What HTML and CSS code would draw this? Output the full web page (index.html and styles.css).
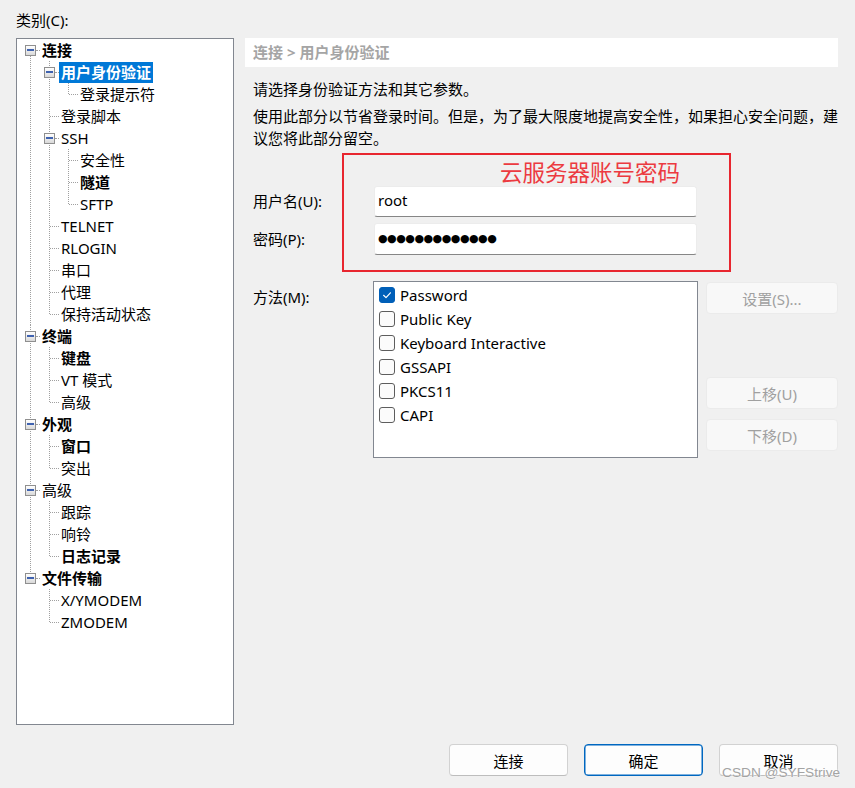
FILE: index.html
```html
<!DOCTYPE html>
<html lang="zh-CN">
<head>
<meta charset="utf-8">
<title>会话选项</title>
<link rel="stylesheet" href="styles.css">
</head>
<body>
<div class="dialog">
  <div class="cat-label">类别(C):</div>
  <div class="main">
    <div class="tree">
      <ul class="tree-root">
        <li>
          <div class="row"><span class="g"><span class="box"><i></i></span><span class="hl hb"></span></span><span class="t b">连接</span></div>
          <ul>
            <li>
              <div class="row"><span class="g"><span class="box"><i></i></span><span class="hl hb"></span></span><span class="t b sel">用户身份验证</span></div>
              <ul>
                <li><div class="row"><span class="g"><span class="hl"></span></span><span class="t">登录提示符</span></div></li>
              </ul>
            </li>
            <li><div class="row"><span class="g"><span class="hl"></span></span><span class="t">登录脚本</span></div></li>
            <li>
              <div class="row"><span class="g"><span class="box"><i></i></span><span class="hl hb"></span></span><span class="t">SSH</span></div>
              <ul>
                <li><div class="row"><span class="g"><span class="hl"></span></span><span class="t">安全性</span></div></li>
                <li><div class="row"><span class="g"><span class="hl"></span></span><span class="t b">隧道</span></div></li>
                <li><div class="row"><span class="g"><span class="hl"></span></span><span class="t">SFTP</span></div></li>
              </ul>
            </li>
            <li><div class="row"><span class="g"><span class="hl"></span></span><span class="t">TELNET</span></div></li>
            <li><div class="row"><span class="g"><span class="hl"></span></span><span class="t">RLOGIN</span></div></li>
            <li><div class="row"><span class="g"><span class="hl"></span></span><span class="t">串口</span></div></li>
            <li><div class="row"><span class="g"><span class="hl"></span></span><span class="t">代理</span></div></li>
            <li><div class="row"><span class="g"><span class="hl"></span></span><span class="t">保持活动状态</span></div></li>
          </ul>
        </li>
        <li>
          <div class="row"><span class="g"><span class="box"><i></i></span><span class="hl hb"></span></span><span class="t b">终端</span></div>
          <ul>
            <li><div class="row"><span class="g"><span class="hl"></span></span><span class="t b">键盘</span></div></li>
            <li><div class="row"><span class="g"><span class="hl"></span></span><span class="t">VT 模式</span></div></li>
            <li><div class="row"><span class="g"><span class="hl"></span></span><span class="t">高级</span></div></li>
          </ul>
        </li>
        <li>
          <div class="row"><span class="g"><span class="box"><i></i></span><span class="hl hb"></span></span><span class="t b">外观</span></div>
          <ul>
            <li><div class="row"><span class="g"><span class="hl"></span></span><span class="t b">窗口</span></div></li>
            <li><div class="row"><span class="g"><span class="hl"></span></span><span class="t">突出</span></div></li>
          </ul>
        </li>
        <li>
          <div class="row"><span class="g"><span class="box"><i></i></span><span class="hl hb"></span></span><span class="t">高级</span></div>
          <ul>
            <li><div class="row"><span class="g"><span class="hl"></span></span><span class="t">跟踪</span></div></li>
            <li><div class="row"><span class="g"><span class="hl"></span></span><span class="t">响铃</span></div></li>
            <li><div class="row"><span class="g"><span class="hl"></span></span><span class="t b">日志记录</span></div></li>
          </ul>
        </li>
        <li>
          <div class="row"><span class="g"><span class="box"><i></i></span><span class="hl hb"></span></span><span class="t b">文件传输</span></div>
          <ul>
            <li><div class="row"><span class="g"><span class="hl"></span></span><span class="t">X/YMODEM</span></div></li>
            <li><div class="row"><span class="g"><span class="hl"></span></span><span class="t">ZMODEM</span></div></li>
          </ul>
        </li>
      </ul>
    </div>

    <div class="panel">
      <div class="crumb">连接 &gt; 用户身份验证</div>
      <p class="p1">请选择身份验证方法和其它参数。</p>
      <p class="p2">使用此部分以节省登录时间。但是，为了最大限度地提高安全性，如果担心安全问题，建<br>议您将此部分留空。</p>

      <div class="field-row r1">
        <label class="lbl">用户名(U):</label>
        <div class="input">root</div>
      </div>
      <div class="field-row r2">
        <label class="lbl">密码(P):</label>
        <div class="input pw">●●●●●●●●●●●●●</div>
      </div>

      <div class="method-row">
        <label class="lbl mlbl">方法(M):</label>
        <div class="list">
          <div class="item"><span class="cb on"><svg viewBox="0 0 16 16" width="16" height="16"><path d="M4.6 8.3 L7 10.6 L11.4 5.8" fill="none" stroke="#fff" stroke-width="1.2" stroke-linecap="round" stroke-linejoin="round"/></svg></span><span>Password</span></div>
          <div class="item"><span class="cb"></span><span>Public Key</span></div>
          <div class="item"><span class="cb"></span><span>Keyboard Interactive</span></div>
          <div class="item"><span class="cb"></span><span>GSSAPI</span></div>
          <div class="item"><span class="cb"></span><span>PKCS11</span></div>
          <div class="item"><span class="cb"></span><span>CAPI</span></div>
        </div>
        <div class="side">
          <div class="btn dis s1">设置(S)...</div>
          <div class="btn dis s2">上移(U)</div>
          <div class="btn dis s3">下移(D)</div>
        </div>
      </div>
    </div>
  </div>

  <div class="footer">
    <div class="btn fb">连接</div>
    <div class="btn fb primary">确定</div>
    <div class="btn fb">取消</div>
  </div>

  <div class="note-box"></div>
  <div class="note-text">云服务器账号密码</div>
  <div class="watermark">CSDN @SYFStrive</div>
</div>
</body>
</html>
```

FILE: styles.css
```css
* { box-sizing: border-box; }
html, body { margin: 0; padding: 0; }
body {
  background: #f0f0f0;
  font-family: "Noto Sans", "Noto Sans CJK SC", sans-serif;
  font-size: 15px;
  color: #000;
}
.dialog {
  position: relative;
  width: 855px;
  height: 788px;
  padding: 0 17px 0 16px;
  overflow: hidden;
}
.cat-label {
  height: 38px;
  padding-top: 9px;
  line-height: 22px;
}
.main {
  display: flex;
  gap: 11px;
  height: 687px;
}

/* tree */
.tree {
  width: 218px;
  height: 687px;
  flex: none;
  background: #fff;
  border: 1px solid #828790;
  padding-left: 8px;
}
.tree ul { list-style: none; margin: 0; padding: 0; }
.tree ul ul { padding-left: 19px; }
.tree li {
  background: repeating-linear-gradient(to bottom, #a0a0a0 0 1px, transparent 1px 2px) 5px 0 / 1px 100% no-repeat;
}
.tree li:last-child { background-size: 1px 11px; }
.tree-root > li:first-child { background-position: 5px 11px; }
.row {
  display: flex;
  align-items: center;
  height: 22px;
  line-height: 22px;
  white-space: nowrap;
}
.g {
  display: flex;
  align-items: center;
  width: 17px;
  height: 22px;
  flex: none;
}
.box {
  width: 11px;
  height: 11px;
  flex: none;
  border: 1px solid #8f8f8f;
  background: linear-gradient(to bottom, #ffffff, #d9d9d9);
  display: flex;
  align-items: center;
  justify-content: center;
}
.box i {
  display: block;
  width: 7px;
  height: 2px;
  background: #3f62b0;
}
.hl {
  display: block;
  height: 0;
  border-top: 1px dotted #a0a0a0;
  margin-left: 6px;
  width: 9px;
}
.hl.hb { margin-left: 0; width: 4px; }
.t { color: #000; }
.b { font-weight: 700; }
.sel {
  background: #0078d7;
  color: #fff;
  margin-left: -2px;
  padding: 0 2px;
  line-height: 21px;
  margin-top: 1px;
}

/* panel */
.panel {
  flex: 1;
  min-width: 0;
}
.crumb {
  height: 29px;
  line-height: 29px;
  background: #fff;
  padding-left: 8px;
  color: #a5a5a5;
  font-weight: 700;
}
.panel p {
  margin: 0;
  padding-left: 8px;
  line-height: 22px;
  white-space: nowrap;
}
.p1 { margin-top: 11px !important; }
.p2 { margin-top: 5px !important; }

.field-row {
  display: flex;
  align-items: center;
  padding-left: 8px;
}
.r1 { margin-top: 37px; height: 31px; }
.r2 { margin-top: 6px; height: 32px; }
.lbl {
  width: 121px;
  flex: none;
  line-height: 22px;
  margin-top: -1px;
}
.input {
  width: 323px;
  height: 100%;
  background: #fff;
  border: 1px solid #ececec;
  border-bottom-color: #868686;
  border-radius: 3px;
  padding-left: 3px;
  line-height: 26px;
}
.pw {
  font-family: "DejaVu Sans", sans-serif;
  font-size: 11px;
  letter-spacing: -0.5px;
  line-height: 30px;
}

.method-row {
  display: flex;
  align-items: flex-start;
  margin-top: 26px;
  padding-left: 8px;
}
.mlbl { width: 120px; padding-top: 5px; margin-top: 0; }
.list {
  width: 325px;
  height: 177px;
  flex: none;
  background: #fff;
  border: 1px solid #828790;
  padding: 1px 0 0 5px;
}
.item {
  display: flex;
  align-items: center;
  height: 24px;
  gap: 5px;
  white-space: nowrap;
}
.cb {
  width: 16px;
  height: 16px;
  flex: none;
  border: 1px solid #5d5d5d;
  border-radius: 3px;
  background: #fbfbfb;
}
.cb.on {
  border-color: #005fb8;
  background: #005fb8;
}
.cb.on svg { display: block; margin: -1px; }
.side {
  margin-left: 8px;
  width: 132px;
  flex: none;
  display: flex;
  flex-direction: column;
}
.btn {
  height: 32px;
  border-radius: 4px;
  display: flex;
  align-items: center;
  justify-content: center;
}
.dis {
  background: #f8f8f8;
  border: 1px solid #ebebeb;
  color: #a0a0a0;
}
.s1 { margin-top: 1px; }
.s2 { margin-top: 63px; }
.s3 { margin-top: 10px; }

.footer {
  display: flex;
  justify-content: flex-end;
  gap: 16px;
  margin-top: 19px;
}
.fb {
  width: 119px;
  background: #fdfdfd;
  border: 1px solid #d2d2d2;
  border-bottom-color: #bdbdbd;
}
.fb.primary {
  border: 1px solid #0067c0;
  box-shadow: inset 0 0 0 0.5px #0067c0;
}

.note-box {
  position: absolute;
  left: 342px;
  top: 153px;
  width: 389px;
  height: 119px;
  border: 2px solid #e8262f;
}
.note-text {
  position: absolute;
  left: 500px;
  top: 157px;
  line-height: 28px;
  font-size: 22.5px;
  color: #ec3a40;
  font-family: "Noto Sans CJK SC", sans-serif;
}
.watermark {
  position: absolute;
  left: 722px;
  top: 763px;
  font-family: "Liberation Sans", sans-serif;
  font-size: 13.7px;
  line-height: 20px;
  color: #a3a3a3;
  text-shadow: 0 0 2px #fff, 0 0 1px #fff;
}
```
